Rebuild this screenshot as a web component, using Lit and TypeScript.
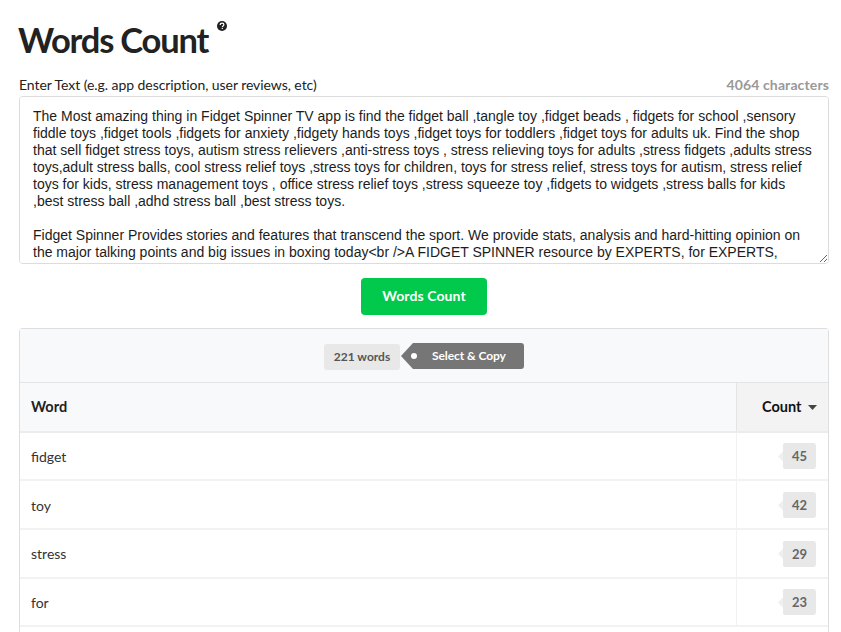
import { LitElement, html, css } from "lit";
import { customElement } from "lit/decorators.js";

const TEXT = `The Most amazing thing in Fidget Spinner TV app is find the fidget ball ,tangle toy ,fidget beads , fidgets for school ,sensory fiddle toys ,fidget tools ,fidgets for anxiety ,fidgety hands toys ,fidget toys for toddlers ,fidget toys for adults uk. Find the shop that sell fidget stress toys, autism stress relievers ,anti-stress toys , stress relieving toys for adults ,stress fidgets ,adults stress toys,adult stress balls, cool stress relief toys ,stress toys for children, toys for stress relief, stress toys for autism, stress relief toys for kids, stress management toys , office stress relief toys ,stress squeeze toy ,fidgets to widgets ,stress balls for kids ,best stress ball ,adhd stress ball ,best stress toys.

Fidget Spinner Provides stories and features that transcend the sport. We provide stats, analysis and hard-hitting opinion on the major talking points and big issues in boxing today<br />A FIDGET SPINNER resource by EXPERTS, for EXPERTS, covering every aspect of the game.`;

const ROWS: [string, number][] = [
  ["fidget", 45],
  ["toy", 42],
  ["stress", 29],
  ["for", 23],
];

@customElement("app-root")
export class AppRoot extends LitElement {
  static styles = css`
    :host {
      display: flex;
      flex-direction: column;
      height: 632px;
      overflow: hidden;
      box-sizing: border-box;
      padding: 0 12px 0 19px;
      background: #fff;
      color: #222;
      font-family: Lato, sans-serif;
      font-size: 14px;
    }
    .title {
      display: flex;
      align-items: flex-start;
      flex: none;
      height: 72px;
      padding-top: 18px;
      box-sizing: border-box;
    }
    h1 {
      margin: 0 0 0 -1px;
      font-size: 34.5px;
      line-height: 44px;
      font-weight: 700;
      letter-spacing: -1.2px;
    }
    .help {
      margin: 3px 0 0 9px;
      width: 10px;
      height: 10px;
    }
    .label-row {
      display: flex;
      justify-content: space-between;
      align-items: center;
      flex: none;
      box-sizing: border-box;
      height: 24px;
      padding-top: 2px;
      line-height: 22px;
      letter-spacing: -0.06px;
    }
    .chars {
      color: #999;
      font-weight: 700;
      letter-spacing: 0.13px;
    }
    textarea {
      display: block;
      flex: none;
      box-sizing: border-box;
      width: 100%;
      height: 168px;
      margin: 0;
      padding: 11px 13px;
      border: 1px solid #dcdcdc;
      border-radius: 4px;
      outline: none;
      resize: vertical;
      scrollbar-width: none;
      color: #1c1c1c;
      font-family: "Liberation Sans", Arial, sans-serif;
      font-size: 14px;
      line-height: 17px;
    }
    .action {
      display: flex;
      justify-content: center;
      flex: none;
      padding: 14px 0 13px;
    }
    button {
      width: 126px;
      height: 37px;
      padding: 0 0 2px;
      border: 0;
      border-radius: 4px;
      background: #00c94b;
      color: #fff;
      font-family: Lato, sans-serif;
      font-size: 14px;
      font-weight: 700;
      letter-spacing: 0.1px;
    }
    .panel {
      flex: 1;
      border: 1px solid #dedede;
      border-bottom: 0;
      border-radius: 4px 4px 0 0;
    }
    .summary {
      display: flex;
      justify-content: center;
      align-items: flex-start;
      box-sizing: border-box;
      height: 54px;
      padding-top: 14px;
      background: #f8f9fa;
      border-bottom: 1px solid #e4e4e4;
      font-size: 12px;
      font-weight: 700;
    }
    .total {
      box-sizing: border-box;
      width: 76px;
      height: 26px;
      line-height: 26px;
      margin-top: 1px;
      text-align: center;
      border-radius: 3px;
      background: #e8e8e8;
      color: #555;
    }
    .copy {
      position: relative;
      box-sizing: border-box;
      width: 111px;
      height: 26px;
      line-height: 25px;
      margin-left: 13px;
      padding-left: 19px;
      border-radius: 0 3px 3px 0;
      background: #767676;
      color: #fff;
      letter-spacing: -0.08px;
    }
    .copy::before {
      content: "";
      position: absolute;
      left: -12px;
      top: 0;
      width: 12px;
      height: 26px;
      background: #767676;
      clip-path: polygon(100% 0, 100% 100%, 0 50%);
    }
    .copy::after {
      content: "";
      position: absolute;
      left: -2px;
      top: 10px;
      width: 6px;
      height: 6px;
      border-radius: 50%;
      background: #fff;
    }
    .row {
      display: grid;
      grid-template-columns: 1fr 92px;
      box-sizing: border-box;
      height: 48.67px;
      border-bottom: 2px solid #f2f2f2;
    }
    .head {
      height: 49.67px;
      background: #f8f9fa;
      border-bottom-color: #ececec;
      font-size: 14.5px;
      font-weight: 700;
    }
    .cell {
      display: flex;
      align-items: center;
      padding-left: 11px;
    }
    .row:not(.head) .cell {
      padding-top: 1px;
      color: #333;
    }
    .count {
      justify-content: flex-end;
      padding: 0 12px 0 0;
      border-left: 1px solid #f2f2f2;
    }
    .head .count {
      justify-content: flex-start;
      padding: 0 0 0 25px;
      background: #f3f3f3;
      border-left-color: #e4e4e4;
      color: #111;
    }
    .head svg {
      width: 9px;
      height: 5px;
      margin: 1px 0 0 7px;
    }
    .tag {
      position: relative;
      box-sizing: border-box;
      width: 33px;
      height: 26px;
      line-height: 26px;
      text-align: center;
      border-radius: 2px 3px 3px 2px;
      background: #e8e8e8;
      color: #666;
      font-size: 13px;
      font-weight: 700;
    }
    .tag::before {
      content: "";
      position: absolute;
      left: -5px;
      top: 8px;
      width: 5px;
      height: 10px;
      background: #efefef;
      clip-path: polygon(100% 0, 100% 100%, 0 50%);
    }
  `;

  render() {
    return html`
      <div class="title">
        <h1>Words Count</h1>
        <svg class="help" viewBox="0 0 10 10">
          <circle cx="5" cy="5" r="5" fill="#222" />
          <path d="M3.2 3.9c0-1.2.9-1.8 1.9-1.8s1.8.6 1.8 1.6c0 1.2-1.5 1.2-1.5 2.3" fill="none" stroke="#fff" stroke-width="1.2" />
          <rect x="4.7" y="6.8" width="1.2" height="1.2" fill="#fff" />
        </svg>
      </div>
      <div class="label-row">
        <span>Enter Text (e.g. app description, user reviews, etc)</span>
        <span class="chars">4064 characters</span>
      </div>
      <textarea .value=${TEXT}></textarea>
      <div class="action"><button>Words Count</button></div>
      <div class="panel">
        <div class="summary">
          <span class="total">221 words</span>
          <span class="copy">Select &amp; Copy</span>
        </div>
        <div class="row head">
          <div class="cell">Word</div>
          <div class="cell count">
            Count<svg viewBox="0 0 9 5"><path d="M0 0h9L4.5 5z" fill="#444" /></svg>
          </div>
        </div>
        ${ROWS.map(
          ([word, count]) => html`
            <div class="row">
              <div class="cell">${word}</div>
              <div class="cell count"><span class="tag">${count}</span></div>
            </div>
          `
        )}
      </div>
    `;
  }
}
